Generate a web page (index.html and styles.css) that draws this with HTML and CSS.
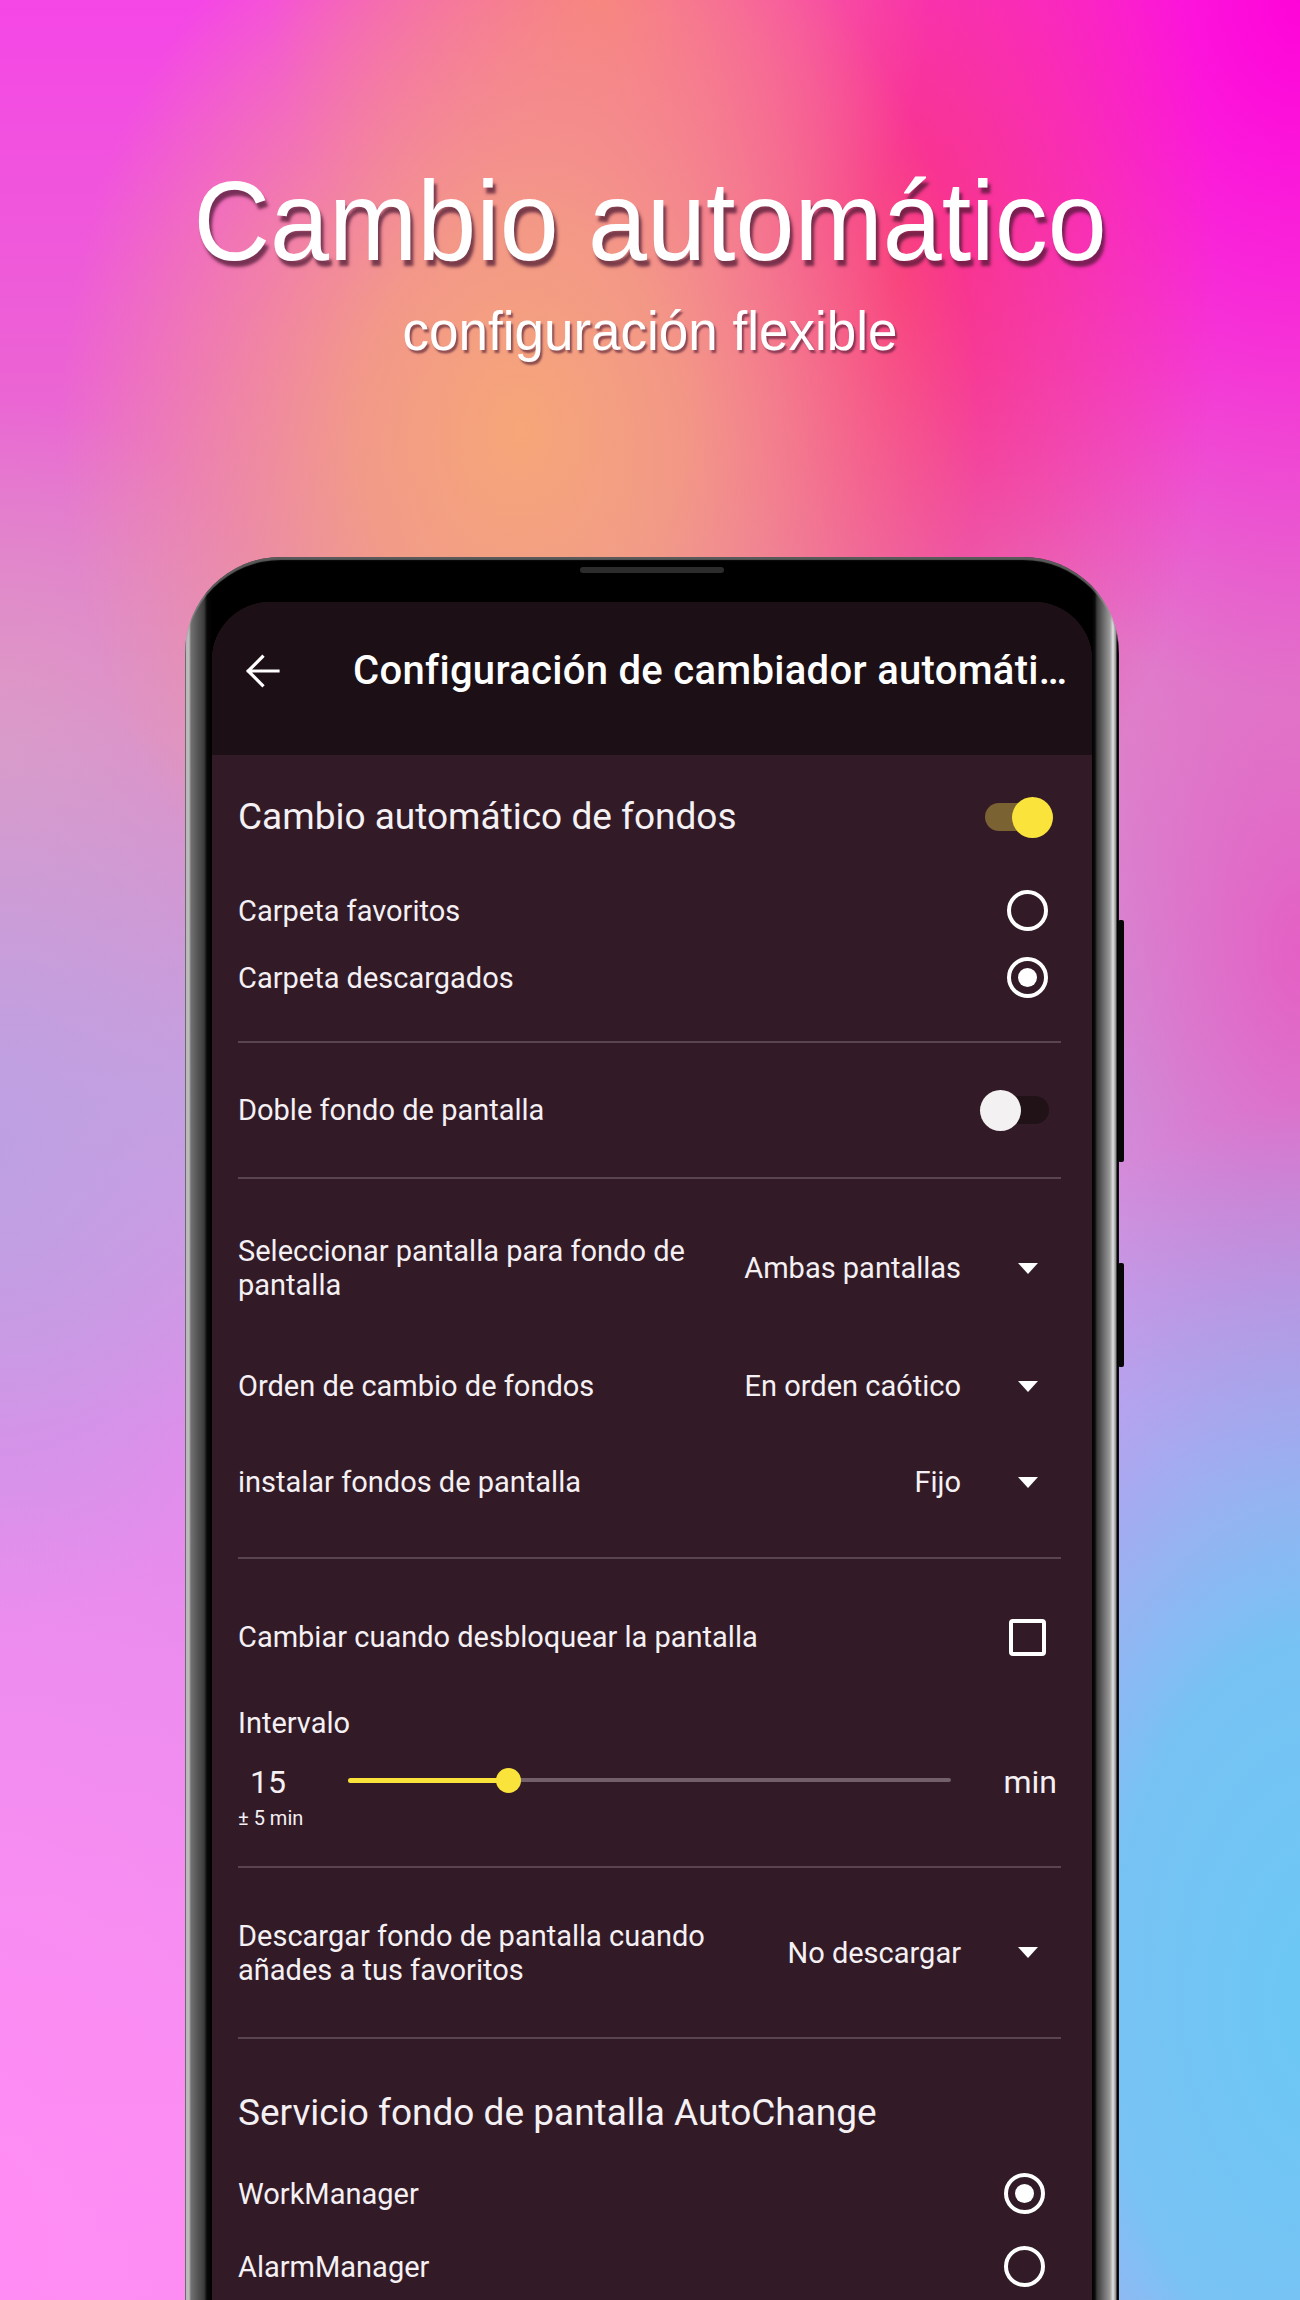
FILE: index.html
```html
<!DOCTYPE html>
<html lang="es">
<head>
<meta charset="utf-8">
<title>Cambio automático</title>
<link rel="stylesheet" href="styles.css">
</head>
<body>
<div class="page">
  <header class="hero">
    <h1 class="hero-title">Cambio automático</h1>
    <p class="hero-sub">configuración flexible</p>
  </header>

  <div class="phone">
    <span class="speaker"></span>
    <span class="side-btn btn-vol"></span>
    <span class="side-btn btn-pow"></span>
    <div class="screen">
      <div class="appbar">
        <div class="appbar-row">
          <svg class="back" viewBox="0 0 24 24" aria-hidden="true">
            <path d="M20 12H5.2M12.2 4.9L5.1 12l7.1 7.1" fill="none" stroke="#ffffff" stroke-width="1.6" stroke-linecap="square" stroke-linejoin="miter"/>
          </svg>
          <div class="appbar-title">Configuración de cambiador automático de fondos</div>
        </div>
      </div>

      <div class="content">
        <section class="sec sec-1">
          <div class="row row-head">
            <span class="head">Cambio automático de fondos</span>
            <span class="switch on"><span class="knob"></span></span>
          </div>
          <div class="row row-radio">
            <span class="label">Carpeta favoritos</span>
            <span class="radio"></span>
          </div>
          <div class="row row-radio">
            <span class="label">Carpeta descargados</span>
            <span class="radio checked"><span class="dot"></span></span>
          </div>
        </section>
        <div class="sep"></div>

        <section class="sec sec-2">
          <div class="row row-fill">
            <span class="label">Doble fondo de pantalla</span>
            <span class="switch off"><span class="knob"></span></span>
          </div>
        </section>
        <div class="sep"></div>

        <section class="sec sec-3">
          <div class="row row-dd">
            <span class="label wrap">Seleccionar pantalla para fondo de pantalla</span>
            <span class="value">Ambas pantallas</span>
            <svg class="dd-arrow" viewBox="0 0 20 11" aria-hidden="true"><path d="M0 0h20L10 11z" fill="#ffffff"/></svg>
          </div>
          <div class="row row-dd gap-top">
            <span class="label wrap">Orden de cambio de fondos</span>
            <span class="value">En orden caótico</span>
            <svg class="dd-arrow" viewBox="0 0 20 11" aria-hidden="true"><path d="M0 0h20L10 11z" fill="#ffffff"/></svg>
          </div>
          <div class="row row-dd">
            <span class="label wrap">instalar fondos de pantalla</span>
            <span class="value">Fijo</span>
            <svg class="dd-arrow" viewBox="0 0 20 11" aria-hidden="true"><path d="M0 0h20L10 11z" fill="#ffffff"/></svg>
          </div>
        </section>
        <div class="sep"></div>

        <section class="sec sec-4">
          <div class="row row-head">
            <span class="label">Cambiar cuando desbloquear la pantalla</span>
            <span class="checkbox"></span>
          </div>
          <div class="interval-label">Intervalo</div>
          <div class="slider-row">
            <div class="num-col">
              <div class="num">15</div>
              <div class="tol">± 5 min</div>
            </div>
            <div class="slider">
              <span class="track-active" style="width: 26.5%"></span>
              <span class="slider-thumb"></span>
              <span class="track-rest"></span>
            </div>
            <div class="unit">min</div>
          </div>
        </section>
        <div class="sep"></div>

        <section class="sec sec-5">
          <div class="row row-fill">
            <span class="label wrap">Descargar fondo de pantalla cuando añades a tus favoritos</span>
            <span class="value">No descargar</span>
            <svg class="dd-arrow" viewBox="0 0 20 11" aria-hidden="true"><path d="M0 0h20L10 11z" fill="#ffffff"/></svg>
          </div>
        </section>
        <div class="sep"></div>

        <section class="sec sec-6">
          <div class="head-line">Servicio fondo de pantalla AutoChange</div>
          <div class="row row-svc">
            <span class="label">WorkManager</span>
            <span class="radio checked"><span class="dot"></span></span>
          </div>
          <div class="row row-svc">
            <span class="label">AlarmManager</span>
            <span class="radio"></span>
          </div>
        </section>
      </div>
    </div>
  </div>
</div>
</body>
</html>
```

FILE: styles.css
```css
html, body {
  margin: 0;
  padding: 0;
}

body {
  width: 1300px;
  height: 2300px;
  overflow: hidden;
  font-family: Roboto, "Liberation Sans", Arial, sans-serif;
  background:
    radial-gradient(ellipse 460px 600px at 520px 430px, rgba(246, 166, 120, 1) 0%, rgba(244, 162, 124, 0.85) 35%, rgba(240, 160, 130, 0) 100%),
    radial-gradient(ellipse 330px 330px at 600px 0px, rgba(248, 120, 128, 1), rgba(248, 120, 128, 0) 100%),
    radial-gradient(ellipse 320px 640px at 900px 280px, rgba(250, 46, 122, 0.95), rgba(250, 46, 122, 0) 100%),
    radial-gradient(ellipse 480px 700px at 1300px 0px, rgba(255, 4, 216, 1), rgba(255, 4, 216, 0) 100%),
    radial-gradient(ellipse 560px 900px at 1330px 2000px, rgba(106, 200, 244, 1), rgba(106, 200, 244, 0.9) 40%, rgba(106, 200, 244, 0) 100%),
    radial-gradient(ellipse 300px 560px at 1300px 950px, rgba(228, 96, 196, 1), rgba(228, 96, 196, 0) 100%),
    radial-gradient(ellipse 560px 760px at -40px 2250px, rgba(255, 140, 244, 1), rgba(255, 140, 244, 0) 100%),
    radial-gradient(ellipse 320px 480px at 0px 1150px, rgba(190, 160, 226, 1), rgba(190, 160, 226, 0) 100%),
    radial-gradient(ellipse 300px 360px at 0px 760px, rgba(222, 156, 196, 0.9), rgba(222, 156, 196, 0) 100%),
    linear-gradient(180deg, #f546e6 0%, #ec62d4 16%, #dc8ccc 32%, #c8a0e0 48%, #e28cec 62%, #fb8ef2 100%);
}

.page {
  width: 1300px;
  height: 2300px;
}

/* ---------- hero ---------- */
.hero {
  height: 557px;
  box-sizing: border-box;
  padding-top: 168px;
  text-align: center;
  color: #ffffff;
}

.hero-title {
  margin: 0;
  font-family: "Liberation Sans", Arial, sans-serif;
  font-weight: 400;
  font-size: 106px;
  line-height: 1;
  transform: scaleY(1.06);
  text-shadow: 3px 5px 3px rgba(72, 22, 48, 0.72);
}

.hero-sub {
  margin: 30px 0 0;
  font-family: "Liberation Sans", Arial, sans-serif;
  font-weight: 400;
  font-size: 53px;
  line-height: 1;
  transform: scaleY(1.06);
  text-shadow: 2px 3px 2px rgba(72, 22, 48, 0.6);
}

/* ---------- phone ---------- */
.phone {
  position: relative;
  margin-left: 185px;
  width: 934px;
  height: 1743px;
  box-sizing: border-box;
  padding: 45px 27px 0;
  border-radius: 96px 96px 0 0;
  background: linear-gradient(90deg,
    #1a1a1a 0px, #b8b8b8 1px, #bdbdbd 4px, #707070 6px, #3c3c3c 19px, #080808 22px, #000 27px,
    #000 calc(100% - 27px), #0c0c0c calc(100% - 24px), #3a3a3a calc(100% - 22px),
    #9c9c9c calc(100% - 9px), #e2e2e2 calc(100% - 6px), #8a8a8a calc(100% - 3px), #000 calc(100% - 2px));
  box-shadow: inset 0 3px 1px rgba(150, 150, 150, 0.6);
}

.speaker {
  position: absolute;
  left: 395px;
  top: 10px;
  width: 144px;
  height: 6px;
  border-radius: 3px;
  background: #2c2c2c;
}

.side-btn {
  position: absolute;
  right: -5px;
  width: 6px;
  border-radius: 2px;
  background: #070707;
}

.btn-vol {
  top: 363px;
  height: 242px;
}

.btn-pow {
  top: 706px;
  height: 104px;
}

.screen {
  height: 100%;
  border-radius: 58px 58px 0 0;
  overflow: hidden;
  background: #321b27;
  color: #f5f0f3;
}

/* ---------- app bar ---------- */
.appbar {
  height: 153px;
  box-sizing: border-box;
  padding: 21px 12px 36px 26px;
  background: #1c0f15;
}

.appbar-row {
  height: 96px;
  display: flex;
  align-items: center;
}

.back {
  width: 48px;
  height: 48px;
  flex-shrink: 0;
}

.appbar-title {
  margin-left: 67px;
  min-width: 0;
  font-size: 40px;
  font-weight: 500;
  line-height: 1.2;
  letter-spacing: 0.3px;
  color: #ffffff;
  white-space: nowrap;
  overflow: hidden;
  text-overflow: ellipsis;
}

/* ---------- content ---------- */
.content {
  padding: 0 31px 0 26px;
}

.sep {
  height: 2px;
  background: #5a444f;
}

.row {
  display: flex;
  align-items: center;
}

.label {
  font-size: 29px;
  line-height: 34px;
}

.label.wrap {
  max-width: 490px;
}

.head {
  font-size: 37px;
  line-height: 44px;
}

.value {
  margin-left: auto;
  font-size: 29px;
  line-height: 34px;
  white-space: nowrap;
}

.dd-arrow {
  width: 20px;
  height: 11px;
  flex-shrink: 0;
  margin-left: 57px;
  margin-right: 23px;
}

/* section 1 */
.sec-1 {
  padding: 30px 0 30px;
}

.row-head {
  height: 64px;
}

.sec-1 .row-head {
  margin-bottom: 28px;
}

.row-radio {
  height: 67px;
}

/* switch */
.switch {
  margin-left: auto;
  margin-right: 12px;
  width: 64px;
  height: 28px;
  border-radius: 14px;
  display: flex;
  align-items: center;
  flex-shrink: 0;
}

.knob {
  width: 41px;
  height: 41px;
  border-radius: 50%;
  flex-shrink: 0;
}

.switch.on {
  background: #7a6232;
}

.switch.on .knob {
  margin-left: auto;
  margin-right: -4px;
  background: #fae33b;
}

.switch.off {
  background: #211218;
}

.switch.off .knob {
  margin-left: -5px;
  background: #f3f1f2;
}

/* radio */
.radio {
  margin-left: auto;
  margin-right: 13px;
  width: 41px;
  height: 41px;
  box-sizing: border-box;
  border: 4px solid #ffffff;
  border-radius: 50%;
  display: flex;
  align-items: center;
  justify-content: center;
  flex-shrink: 0;
}

.dot {
  width: 19px;
  height: 19px;
  border-radius: 50%;
  background: #ffffff;
}

/* section 2 */
.sec-2 .row-fill {
  height: 134px;
}

/* section 3 */
.sec-3 {
  padding: 41px 0 27px;
}

.row-dd {
  height: 96px;
}

.row-dd.gap-top {
  margin-top: 22px;
}

/* section 4 */
.sec-4 {
  padding: 46px 0 37px;
}

.checkbox {
  margin-left: auto;
  margin-right: 15px;
  width: 37px;
  height: 37px;
  box-sizing: border-box;
  border: 4px solid #ffffff;
  border-radius: 4px;
  flex-shrink: 0;
}

.interval-label {
  margin-top: 39px;
  font-size: 29px;
  line-height: 30px;
}

.slider-row {
  margin-top: 20px;
  display: flex;
  align-items: flex-start;
}

.num-col {
  width: 62px;
  flex-shrink: 0;
}

.num {
  padding-left: 12px;
  font-size: 32px;
  line-height: 48px;
}

.tol {
  margin-top: 1px;
  font-size: 20px;
  line-height: 22px;
  white-space: nowrap;
}

.slider {
  flex: 1;
  height: 48px;
  margin: -2px 52px 0 48px;
  display: flex;
  align-items: center;
}

.track-active {
  height: 5px;
  border-radius: 3px 0 0 3px;
  background: #fae33b;
  flex-shrink: 0;
}

.slider-thumb {
  width: 25px;
  height: 25px;
  margin: 0 -12px;
  border-radius: 50%;
  background: #fae33b;
  flex-shrink: 0;
  position: relative;
  z-index: 1;
}

.track-rest {
  flex: 1;
  height: 4px;
  border-radius: 0 2px 2px 0;
  background: #735f69;
}

.unit {
  margin-right: 4px;
  font-size: 32px;
  line-height: 48px;
}

/* section 5 */
.sec-5 .row-fill {
  height: 169px;
}

/* section 6 */
.sec-6 {
  padding-top: 44px;
}

.head-line {
  font-size: 37px;
  line-height: 60px;
  margin-bottom: 14px;
}

.row-svc {
  height: 73px;
}

.row-svc .radio {
  margin-right: 16px;
}
```
